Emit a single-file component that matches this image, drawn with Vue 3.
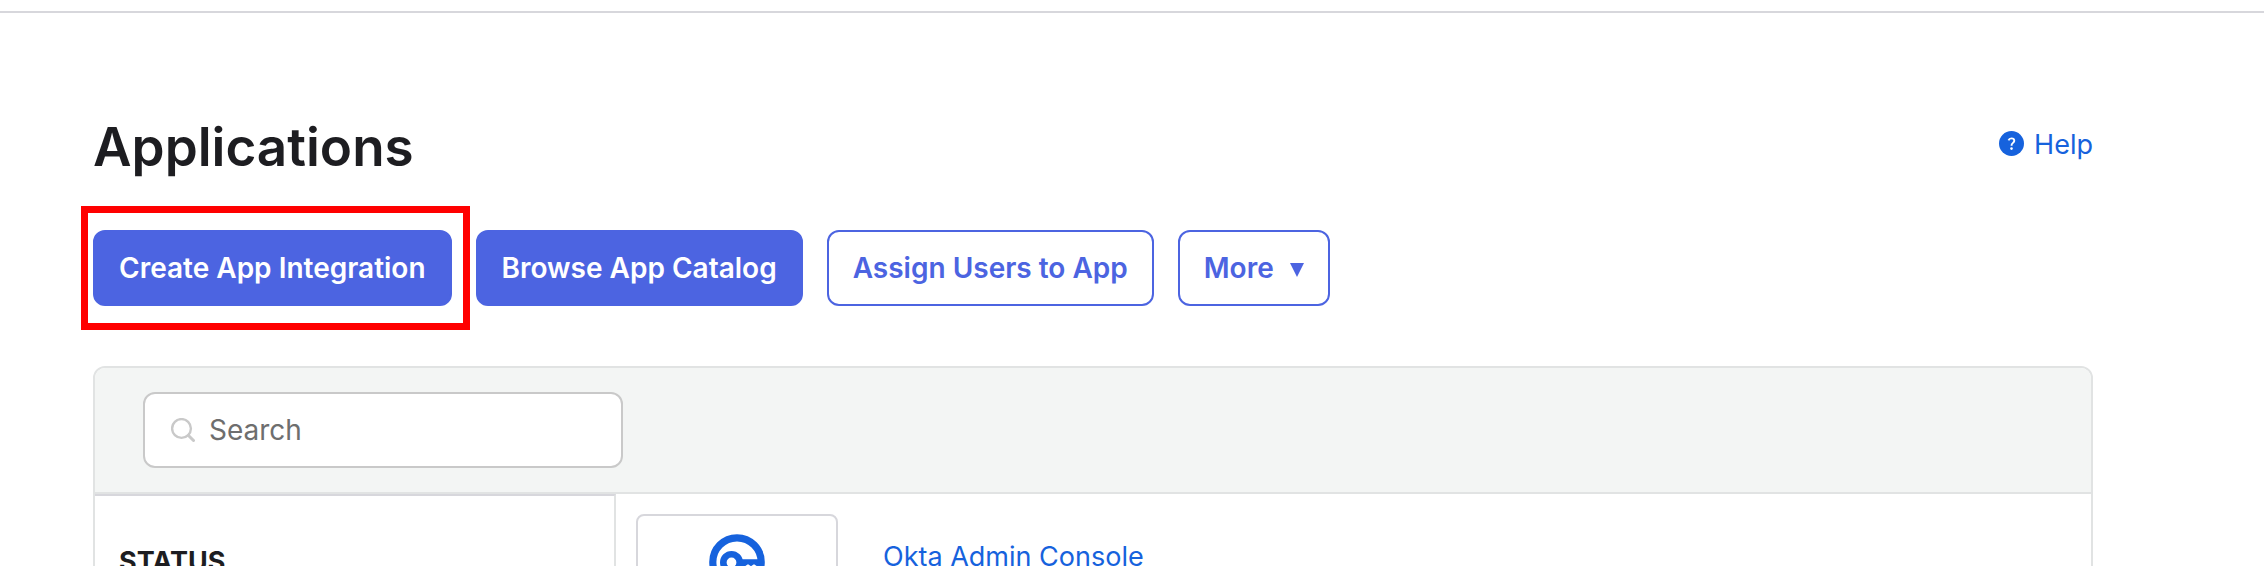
<template>
	<div class="page">
		<div class="top-line"></div>

		<main class="content">
			<!-- Title row -->
			<header class="page-header">
				<h1 class="page-title">Applications</h1>
				<a href="#" class="help-link">
					<svg class="help-icon" viewBox="0 0 25 25" aria-hidden="true">
						<circle cx="12.5" cy="12.5" r="12.5" fill="currentColor" />
						<path d="M9.500 9.300c.5-1.300 1.500-1.900 2.900-1.900 1.700 0 2.900.9 2.900 2.400 0 2-2.700 2.200-2.700 4.300v.6" fill="none" stroke="#fff" stroke-width="1.900" />
						<circle cx="12.500" cy="17.600" r="1.300" fill="#fff" />
					</svg>
					<span>Help</span>
				</a>
			</header>

			<!-- Actions -->
			<div class="actions">
				<div class="highlight">
					<button type="button" class="btn btn-primary">Create App Integration</button>
				</div>
				<button type="button" class="btn btn-primary">Browse App Catalog</button>
				<button type="button" class="btn btn-secondary">Assign Users to App</button>
				<button type="button" class="btn btn-secondary">
					<span>More</span>
					<svg class="caret" viewBox="0 0 14 14" aria-hidden="true">
						<path d="M0 0h14L7 14z" fill="currentColor" />
					</svg>
				</button>
			</div>

			<!-- Applications list -->
			<section class="panel">
				<div class="panel-toolbar">
					<label class="search">
						<svg class="search-icon" viewBox="0 0 24 24" aria-hidden="true">
							<circle cx="10.500" cy="10.500" r="9.400" />
							<path d="M17.500 17.500l5 5" class="search-handle" />
						</svg>
						<input v-model="query" type="text" class="search-input" placeholder="Search" aria-label="Search" />
					</label>
				</div>
				<div class="panel-body">
					<aside class="filters">
						<h2 class="filters-title">STATUS</h2>
					</aside>
					<ul class="app-list">
						<li v-for="app in apps" :key="app.name" class="app-row">
							<div class="app-logo">
								<svg class="app-icon" viewBox="0 0 56 56" aria-hidden="true">
									<circle cx="28" cy="28" r="24.200" fill="none" stroke="currentColor" stroke-width="7.200" />
									<circle cx="22.500" cy="28.500" r="8.200" fill="none" stroke="currentColor" stroke-width="6.600" />
									<path d="M29 25.200h24v7h-5l-3-2-3 2-3-2-3 2h-7z" fill="currentColor" />
								</svg>
							</div>
							<a href="#" class="app-name">{{ app.name }}</a>
						</li>
					</ul>
				</div>
			</section>
		</main>
	</div>
</template>

<script setup>
import { ref } from 'vue'

const query = ref('')

const apps = [{ name: 'Okta Admin Console' }]
</script>

<style>
body {
	margin: 0;
	background: #fff;
}
</style>

<style scoped>
.page {
	height: 100vh;
	overflow: hidden;
	padding-top: 11px;
	box-sizing: border-box;
	font-family: Inter, 'Liberation Sans', sans-serif;
	font-size: 28px;
	line-height: 36px;
	color: #1d1d21;
}

.top-line {
	height: 2px;
	background: #d7d7dc;
}

.content {
	padding: 100px 171px 0 93px;
}

.page-header {
	display: flex;
	align-items: center;
	justify-content: space-between;
	margin-bottom: 49px;
}

.page-title {
	margin: 0;
	font-size: 53px;
	line-height: 68px;
	font-weight: 600;
}

.help-link {
	display: flex;
	align-items: center;
	gap: 10px;
	padding-bottom: 4px;
	font-size: 27px;
	color: #1662dd;
	text-decoration: none;
}

.help-icon {
	width: 25px;
	height: 25px;
	margin-bottom: 4px;
}

/* Buttons */
.actions {
	display: flex;
	gap: 24px;
	margin-bottom: 60px;
}

.btn {
	display: flex;
	align-items: center;
	gap: 16px;
	height: 76px;
	padding: 0 24px;
	border: 2px solid #4c64e1;
	border-radius: 12px;
	font-family: inherit;
	font-size: 28px;
	line-height: 36px;
	font-weight: 600;
	white-space: nowrap;
	cursor: pointer;
}

.btn-primary {
	background: #4c64e1;
	color: #fff;
}

.btn-secondary {
	background: #fff;
	color: #4c64e1;
}

.caret {
	width: 14px;
	height: 14px;
	margin-top: 3px;
}

.highlight {
	position: relative;
}

.highlight::after {
	content: '';
	position: absolute;
	top: -24px;
	right: -18px;
	bottom: -24px;
	left: -12px;
	border: 7px solid #f00;
	pointer-events: none;
}

/* Panel */
.panel {
	border: 2px solid #e1e3e3;
	border-radius: 12px;
	overflow: hidden;
}

.panel-toolbar {
	padding: 24px 48px;
	background: #f3f5f4;
	border-bottom: 2px solid #e1e3e3;
}

.search {
	display: flex;
	align-items: center;
	gap: 14px;
	width: 480px;
	height: 76px;
	padding: 0 26px;
	box-sizing: border-box;
	background: #fff;
	border: 2px solid #c9c9c9;
	border-radius: 12px;
}

.search-icon {
	flex: none;
	width: 24px;
	height: 24px;
	fill: none;
	stroke: #c9c9c9;
	stroke-width: 2.4;
	stroke-linecap: round;
}

.search-handle {
	stroke-width: 3;
}

.search-input {
	flex: 1;
	min-width: 0;
	padding: 0;
	border: 0;
	outline: 0;
	background: transparent;
	font: inherit;
	color: #1d1d21;
}

.search-input::placeholder {
	color: #6e6e6e;
	opacity: 1;
}

.panel-body {
	display: flex;
}

.filters {
	width: 519px;
	min-height: 200px;
	border-top: 2px solid #d7d7dc;
	border-right: 2px solid #e1e3e3;
}

.filters-title {
	margin: 0;
	padding: 48px 24px 0;
	font-size: 27px;
	line-height: 36px;
	font-weight: 700;
}

.app-list {
	flex: 1;
	margin: 0;
	padding: 20px;
	list-style: none;
}

.app-row {
	display: flex;
	gap: 45px;
}

.app-logo {
	display: flex;
	justify-content: center;
	width: 198px;
	height: 96px;
	padding-top: 18px;
	border: 2px solid #d7d7dc;
	border-radius: 8px;
}

.app-icon {
	width: 56px;
	height: 56px;
	color: #1662dd;
}

.app-name {
	padding-top: 25px;
	font-size: 27px;
	color: #1662dd;
	text-decoration: none;
}
</style>
